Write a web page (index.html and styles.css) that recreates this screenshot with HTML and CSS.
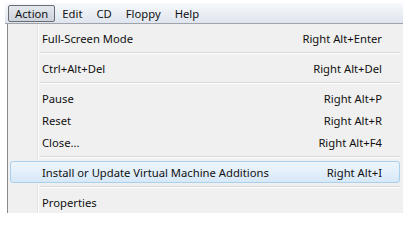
FILE: index.html
```html
<!DOCTYPE html>
<html>
<head>
<meta charset="utf-8">
<link rel="stylesheet" href="styles.css">
</head>
<body>
<div class="window">
  <div class="menubar">
    <span class="mb-item active">Action</span>
    <span class="mb-item">Edit</span>
    <span class="mb-item">CD</span>
    <span class="mb-item">Floppy</span>
    <span class="mb-item">Help</span>
  </div>
  <div class="menu">
    <div class="row"><span class="label">Full-Screen Mode</span><span class="key">Right Alt+Enter</span></div>
    <div class="sep"></div>
    <div class="row"><span class="label">Ctrl+Alt+Del</span><span class="key">Right Alt+Del</span></div>
    <div class="sep"></div>
    <div class="row"><span class="label">Pause</span><span class="key">Right Alt+P</span></div>
    <div class="row"><span class="label">Reset</span><span class="key">Right Alt+R</span></div>
    <div class="row"><span class="label">Close...</span><span class="key">Right Alt+F4</span></div>
    <div class="sep"></div>
    <div class="row hl"><span class="label">Install or Update Virtual Machine Additions</span><span class="key">Right Alt+I</span></div>
    <div class="sep"></div>
    <div class="row"><span class="label">Properties</span><span class="key"></span></div>
  </div>
</div>
</body>
</html>
```
FILE: styles.css
```css
html, body {
  margin: 0;
  padding: 0;
  background: #ffffff;
}
body {
  font-family: "Noto Sans", "Open Sans", sans-serif;
  font-size: 11.25px;
  color: #111;
}
.window {
  padding: 3px 6px 0 5px;
  width: 398px;
}
.menubar {
  display: flex;
  align-items: center;
  height: 20px;
  padding: 0 0 0 3px;
  background: linear-gradient(#f7f9fc, #dfe5ee);
  border-bottom: 1px solid #a0a4aa;
}
.mb-item {
  padding: 0 6px;
  height: 17px;
  line-height: 16px;
  box-sizing: border-box;
  border: 1px solid transparent;
}
.active {
  border: 1px solid #6a6d72;
  border-radius: 2px;
  background: linear-gradient(#e4e8ee, #cdd3dc);
}
.menu {
  margin-left: 2px;
  background: #f0f0f0;
  border-left: 1px solid #8a8a8a;
  padding: 3px 3px 0 2px;
  background-image: linear-gradient(to right, transparent 29px, #e2e3e3 29px, #e2e3e3 30px, #ffffff 30px, #ffffff 31px, transparent 31px);
}
.row {
  display: flex;
  justify-content: space-between;
  align-items: center;
  height: 22px;
  padding: 0 17px 0 31px;
  box-sizing: border-box;
  border: 1px solid transparent;
  border-radius: 3px;
}
.hl {
  border-color: #a9d0ec;
  background: linear-gradient(#eef6fd, #d7e8f7);
}
.sep {
  height: 8px;
  margin-left: 30px;
  background: linear-gradient(transparent 3px, #d7d7d7 3px, #d7d7d7 4px, #ffffff 4px, #ffffff 5px, transparent 5px);
}
```
